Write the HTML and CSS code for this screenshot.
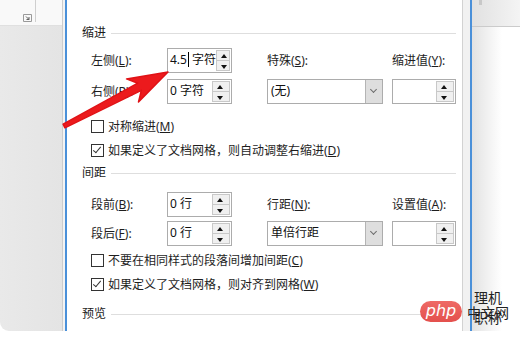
FILE: index.html
```html
<!DOCTYPE html>
<html lang="zh-CN">
<head>
  <meta charset="UTF-8">
  <title>段落</title>
  <link rel="stylesheet" href="styles.css">
</head>
<body>
<div class="screen">
  <div class="doc-left">
    <div class="ribbon">
      <span class="group-end"></span>
      <svg class="launcher" width="9" height="8" viewBox="0 0 9 8">
        <path d="M0.5 0.5h8v7h-8z" fill="none" stroke="#9a9a9a"/>
        <path d="M3 2.5l3 3M6 3v2.5h-2.5" fill="none" stroke="#606060"/>
      </svg>
    </div>
  </div>
  <div class="gap-left"></div>

  <div class="dialog">
    <div class="group-title first"><span>缩进</span></div>
    <div class="grid indent">
      <span class="lbl">左侧(<u>L</u>):</span>
      <div class="spin">
        <span class="val">4.5<i class="caret"></i> 字符</span>
        <span class="arrows"><b class="up"></b><b class="down"></b></span>
      </div>
      <span></span>
      <span class="lbl">特殊(<u>S</u>):</span>
      <span></span>
      <span class="lbl">缩进值(<u>Y</u>):</span>

      <span class="lbl">右侧(<u>R</u>):</span>
      <div class="spin">
        <span class="val">0 字符</span>
        <span class="arrows"><b class="up"></b><b class="down"></b></span>
      </div>
      <span></span>
      <div class="select"><span class="val">(无)</span><span class="drop"></span></div>
      <span></span>
      <div class="spin">
        <span class="val"></span>
        <span class="arrows"><b class="up"></b><b class="down"></b></span>
      </div>
    </div>
    <div class="check first-check"><span class="box"></span><span>对称缩进(<u>M</u>)</span></div>
    <div class="check"><span class="box checked"></span><span>如果定义了文档网格，则自动调整右缩进(<u>D</u>)</span></div>

    <div class="group-title second"><span>间距</span></div>
    <div class="grid spacing">
      <span class="lbl">段前(<u>B</u>):</span>
      <div class="spin">
        <span class="val">0 行</span>
        <span class="arrows"><b class="up"></b><b class="down"></b></span>
      </div>
      <span></span>
      <span class="lbl">行距(<u>N</u>):</span>
      <span></span>
      <span class="lbl">设置值(<u>A</u>):</span>

      <span class="lbl">段后(<u>F</u>):</span>
      <div class="spin">
        <span class="val">0 行</span>
        <span class="arrows"><b class="up"></b><b class="down"></b></span>
      </div>
      <span></span>
      <div class="select"><span class="val">单倍行距</span><span class="drop"></span></div>
      <span></span>
      <div class="spin">
        <span class="val"></span>
        <span class="arrows"><b class="up"></b><b class="down"></b></span>
      </div>
    </div>
    <div class="check second-check"><span class="box"></span><span>不要在相同样式的段落间增加间距(<u>C</u>)</span></div>
    <div class="check"><span class="box checked"></span><span>如果定义了文档网格，则对齐到网格(<u>W</u>)</span></div>

    <div class="group-title third"><span>预览</span></div>
  </div>

  <div class="dialog-frame"></div>

  <div class="doc-right">
    <div class="ribbon-r"><span class="tab"></span></div>
    <div class="doc-text">理机<br>职称</div>
  </div>

  <!-- red annotation arrow -->
  <svg class="arrow" width="520" height="331" viewBox="0 0 520 331">
    <polygon points="168,72 138.5,101.9 141.4,90.3 64.9,127.8 63.1,124.2 137.8,83.2 126.5,78.9"
             fill="#ec1a1d" stroke="#e01216" stroke-width="1.5" stroke-linejoin="round"/>
  </svg>

  <div class="watermark"><span class="php">php</span><span class="cn">中文网</span></div>
</div>
</body>
</html>
```

FILE: styles.css
```css
body {
  margin: 0;
  background: #fff;
  font-family: "Noto Sans", "Noto Sans CJK SC", sans-serif;
  font-size: 12px;
  color: #1e1e1e;
}
u {
  text-decoration: underline;
  text-underline-offset: 1px;
}
.screen {
  position: relative;
  display: flex;
  width: 520px;
  height: 331px;
  overflow: hidden;
  border-bottom-left-radius: 9px;
}

/* document behind the dialog */
.doc-left {
  box-sizing: border-box;
  width: 63px;
  background: linear-gradient(to right, #e9e9e9, #e4e4e4);
  border-right: 1px solid #cdcdcd;
}
.ribbon {
  position: relative;
  height: 25px;
  background: #f9f9f9;
  border-bottom: 1px solid #e0e0e0;
}
.group-end {
  position: absolute;
  left: 35px;
  top: 0;
  width: 1px;
  height: 22px;
  background: #cfcfcf;
}
.launcher {
  position: absolute;
  left: 23px;
  top: 14px;
}
.gap-left {
  width: 2px;
  background: #f3f3f3;
}

/* dialog */
.dialog {
  box-sizing: border-box;
  width: 398px;
  padding: 0 6px 0 15px;
  background: #fff;
  border-left: 2px solid #4a90d9;
  border-right: 1px solid #d2d2d2;
}
.group-title {
  display: flex;
  align-items: center;
  gap: 5px;
  height: 16px;
  line-height: 16px;
  color: #1a1a1a;
}
.group-title::after {
  content: "";
  flex: 1;
  border-top: 1px solid #dedede;
}
.group-title.first { margin-top: 25px; }
.group-title.second { margin-top: 3px; }
.group-title.third { margin-top: 10px; }

.grid {
  display: grid;
  grid-template-columns: 76px 65px 35px 116px 9px 64px;
  grid-template-rows: 25px 25px;
  align-items: center;
  padding-left: 9px;
}
.grid.indent { margin-top: 7px; row-gap: 6px; }
.grid.spacing { margin-top: 11px; row-gap: 4px; }

.lbl {
  white-space: nowrap;
  line-height: 16px;
}

.spin, .select {
  box-sizing: border-box;
  height: 25px;
  display: flex;
  border: 1px solid #acacac;
  background: #fff;
}
.val {
  flex: 1;
  padding-left: 2px;
  line-height: 22px;
  white-space: nowrap;
  color: #111;
}
.caret {
  display: inline-block;
  width: 1px;
  height: 15px;
  background: #000;
  vertical-align: -3px;
  margin-left: 1px;
}
.arrows {
  display: flex;
  flex-direction: column;
  width: 16px;
  margin: 1px 1px 1px 0;
  border: 1px solid #c8c8c8;
  background: #f0f0f0;
}
.arrows b {
  flex: 1;
  position: relative;
}
.arrows b.up { border-bottom: 1px solid #c8c8c8; }
.arrows b::after {
  content: "";
  position: absolute;
  left: 4px;
  top: 3px;
  border-left: 3px solid transparent;
  border-right: 3px solid transparent;
}
.arrows b.up::after { border-bottom: 4px solid #111; }
.arrows b.down::after { border-top: 4px solid #111; top: 4px; }

.select .val { padding-left: 3px; }
.drop {
  position: relative;
  width: 16px;
  background: #dedede;
  border-left: 1px solid #b4b4b4;
}
.drop::after {
  content: "";
  position: absolute;
  left: 5px;
  top: 7px;
  width: 4px;
  height: 4px;
  border-right: 1px solid #6d6d6d;
  border-bottom: 1px solid #6d6d6d;
  transform: rotate(45deg);
}

.check {
  display: flex;
  align-items: center;
  gap: 4px;
  height: 24px;
  padding-left: 9px;
  white-space: nowrap;
}
.check.first-check { margin-top: 10px; }
.check.second-check { margin-top: 2px; }
.box {
  position: relative;
  box-sizing: border-box;
  width: 13px;
  height: 13px;
  border: 1px solid #333;
  background: #fff;
}
.box.checked::after {
  content: "";
  position: absolute;
  left: 3px;
  top: 0px;
  width: 3px;
  height: 7px;
  border-right: 1px solid #333;
  border-bottom: 1px solid #333;
  transform: rotate(40deg);
}

.dialog-frame {
  width: 7px;
  background: #f1f1f1;
  border-right: 2px solid #4a90d9;
}

.doc-right {
  flex: 1;
  background: linear-gradient(to right, #e2e2e2, #ffffff 30px);
}
.ribbon-r {
  position: relative;
  height: 26px;
  background: linear-gradient(to right, #e1e1e1, #f4f4f4);
  border-bottom: 1px solid #cbcbcb;
}
.tab {
  position: absolute;
  left: 7px;
  top: 0;
  width: 3px;
  height: 5px;
  background: #c8c8c8;
}
.doc-text {
  padding: 261px 0 0 2px;
  font-size: 14px;
  line-height: 20px;
  color: #222;
}

.arrow {
  position: absolute;
  left: 0;
  top: 0;
  pointer-events: none;
}

.watermark {
  position: absolute;
  left: 420px;
  top: 299px;
  display: flex;
  align-items: center;
  gap: 5px;
}
.php {
  width: 42px;
  height: 21px;
  border-radius: 11px;
  background: linear-gradient(#ee6a66, #e4504d);
  color: #fff;
  font-family: "DejaVu Sans", sans-serif;
  font-style: italic;
  font-size: 16px;
  line-height: 20px;
  text-align: center;
}
.cn {
  font-size: 14px;
  line-height: 20px;
  color: #222;
  margin-top: 4px;
}
```
